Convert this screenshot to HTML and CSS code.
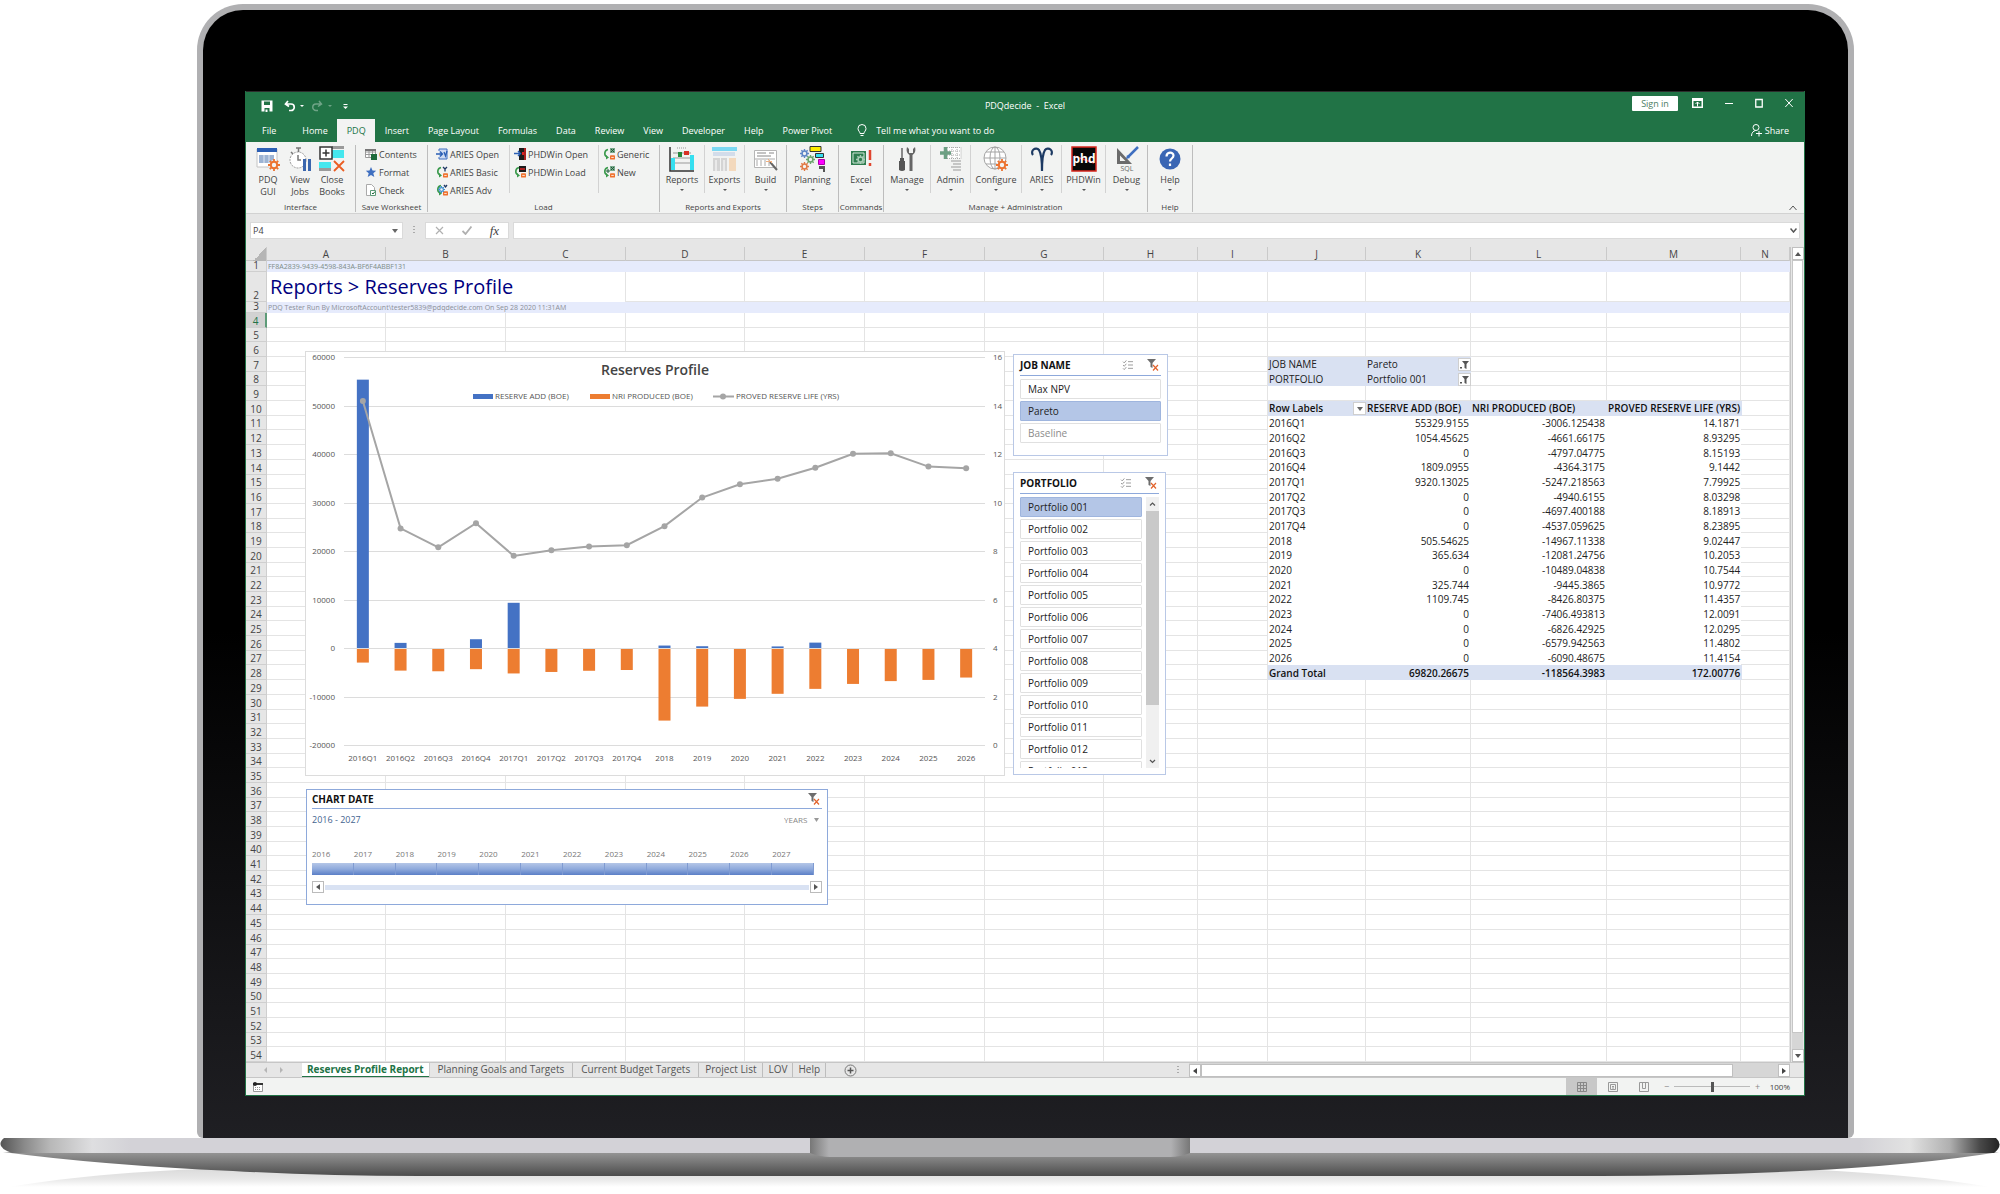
FILE: index.html
```html
<!DOCTYPE html>
<html lang="en">
<head>
<meta charset="utf-8">
<title>PDQdecide - Excel</title>
<link rel="stylesheet" href="styles.css">
</head>
<body>
<svg width="0" height="0" class="defs" aria-hidden="true">
  <defs>
    <symbol id="gear" viewBox="0 0 12 12"><circle cx="6" cy="6" r="3.2" fill="none" stroke="currentColor" stroke-width="2"/><path d="M6 0v3M6 9v3M0 6h3M9 6h3M1.8 1.8l2 2M8.200 8.200l2 2M10.200 1.800l-2 2M3.800 8.200l-2 2" stroke="currentColor" stroke-width="1.800"/></symbol>
    <symbol id="db" viewBox="0 0 6 6"><rect y="1" width="6" height="5" rx="1" fill="#f0702c"/><path d="M1.500 3.500h3" stroke="#fff"/></symbol>
    <symbol id="load" viewBox="0 0 12 12"><path d="M5 1.500a4 4 0 0 0-1 7.500" fill="none" stroke="#3a9a4c" stroke-width="1.600"/><path d="M3 7l3 2.500-3 2z" fill="#3a9a4c"/><use href="#db" x="7" y="6" width="5" height="6"/></symbol>
    <symbol id="funnel" viewBox="0 0 12 12"><path d="M0 0h9L5.500 4v5l-2-1V4z" fill="#6d6d6d"/><path d="M6 6l5 5.500M11 6l-5 5.500" stroke="#e2632c" stroke-width="1.200"/></symbol>
    <symbol id="multi" viewBox="0 0 12 12"><path d="M0 2l1.500 1.500L4 .5M0 6l1.500 1.500L4 4.500M0 10l1.500 1.500L4 8.500M6 2h6M6 6h6M6 10h6" fill="none" stroke="#8a8a8a"/></symbol>
  </defs>
</svg>
<main class="laptop">
  <div class="lid">
    <div class="app">
      <header class="titlebar">
        <div class="quick">
          <button class="tb" aria-label="Save"><svg width="12" height="12" viewBox="0 0 12 12"><path d="M.5.5h11v11H.5z" fill="#fff"/><path d="M3 1.500h6v3.500H3zM3.500 8h5v4h-5z" fill="#217346"/><path d="M4.500 9.500h2V12h-2z" fill="#fff"/></svg></button>
          <button class="tb" aria-label="Undo"><svg width="20" height="12" viewBox="0 0 20 12"><path d="M4 1L1.500 4 5 6.500M2 4h5a3 3 0 0 1 0 6.500H5" fill="none" stroke="#fff" stroke-width="1.700"/><path d="M16 5h4l-2 2z" fill="#fff"/></svg></button>
          <button class="tb faded" aria-label="Redo"><svg width="20" height="12" viewBox="0 0 20 12"><path d="M7 1l2.500 3L6 6.500M9 4H4a3 3 0 0 0 0 6.500h2" fill="none" stroke="#fff" stroke-width="1.500"/><path d="M16 5h4l-2 2z" fill="#fff"/></svg></button>
          <button class="tb" aria-label="Customize"><svg width="5" height="12" viewBox="0 0 5 12"><path d="M.5 4.500h4" stroke="#fff"/><path d="M0 6.500h5L2.500 9z" fill="#fff"/></svg></button>
        </div>
        <h1 class="doc">PDQdecide&nbsp; -&nbsp; Excel</h1>
        <div class="winctl">
          <button class="signin">Sign in</button>
          <button class="tb" aria-label="Ribbon display"><svg width="11" height="10" viewBox="0 0 11 10"><path d="M0 0h11v10H0z" fill="#fff"/><path d="M1.500 3h8v5.500h-8z" fill="#217346"/><path d="M5.500 4v4.500M3.500 6l2-2 2 2" fill="none" stroke="#fff"/></svg></button>
          <button class="tb" aria-label="Minimize"><svg width="8" height="10" viewBox="0 0 8 10"><path d="M0 5.500h8" stroke="#fff"/></svg></button>
          <button class="tb" aria-label="Maximize"><svg width="8" height="10" viewBox="0 0 8 10"><path d="M.75 1.500h6.500v7.500H.75z" fill="none" stroke="#fff" stroke-width="1.300"/></svg></button>
          <button class="tb" aria-label="Close"><svg width="8" height="10" viewBox="0 0 8 10"><path d="M.3 1l7.400 8M7.700 1L.3 9" stroke="#fff"/></svg></button>
        </div>
      </header>
      <nav class="tabs">
        <button class="tab file">File</button><button class="tab">Home</button><button class="tab on">PDQ</button><button class="tab">Insert</button><button class="tab">Page Layout</button><button class="tab">Formulas</button><button class="tab">Data</button><button class="tab">Review</button><button class="tab">View</button><button class="tab">Developer</button><button class="tab">Help</button><button class="tab">Power Pivot</button>
        <button class="tab tell"><svg width="10" height="13" viewBox="0 0 10 13"><path d="M3 9.500C3 7.500 1 7 1 4.500a4 4 0 0 1 8 0C9 7 7 7.500 7 9.500zM3.500 11.500h3" fill="none" stroke="#fff"/></svg>Tell me what you want to do</button>
        <button class="tab share"><svg width="11" height="13" viewBox="0 0 11 13"><circle cx="5" cy="3.500" r="3" fill="none" stroke="#fff"/><path d="M.5 12c0-3.500 2-5 4-5.500M8 7v5.500M5 9.500h6" fill="none" stroke="#fff"/></svg>Share</button>
      </nav>

      <section class="ribbon">
        <div class="group g-interface">
          <div class="items">
            <button class="big"><svg width="24" height="26" viewBox="0 0 24 26"><path d="M1 3h20v18H1z" fill="#fff" stroke="#c4c4c4"/><path d="M1 2h20v4H1z" fill="#2b5fb4"/><path d="M3 9h15v8H3z" fill="#9db4d4"/><path d="M8 9v8M13 9v8" stroke="#dfe7f2"/><circle cx="18" cy="19" r="5" fill="#f3f3f3"/><use href="#gear" x="12" y="13" width="12" height="12" color="#ec7330"/></svg><span>PDQ<br>GUI</span></button>
            <button class="big"><svg width="24" height="26" viewBox="0 0 24 26"><circle cx="10" cy="14" r="8" fill="#fff" stroke="#999" stroke-dasharray="2 1"/><path d="M8 2h5M10.500 2v4M10 9v5h3M3 6l2 2" fill="none" stroke="#777" stroke-width="1.500"/><path d="M15 13h3v12h-3zM20 13h3v12h-3z" fill="#3b66ad"/></svg><span>View<br>Jobs</span></button>
            <button class="big"><svg width="26" height="26" viewBox="0 0 26 26"><path d="M13 0h12v3H13zM0 22h12v3H0z" fill="#9a9a9a"/><path d="M13 4h12v8H13zM0 16h12v6H0z" fill="#45e7ee"/><path d="M1 1h12v12H1z" fill="#fff" stroke="#333" stroke-width="1.500"/><path d="M3.500 7h7M7 3.500v7" stroke="#333" stroke-width="1.500"/><path d="M15 15l10 10M25 15L15 25" stroke="#ea5e23" stroke-width="1.800"/></svg><span>Close<br>Books</span></button>
          </div><span class="caption">Interface</span>
        </div>
        <div class="group g-save">
          <div class="items"><div class="stack">
            <button class="small"><svg width="12" height="12" viewBox="0 0 12 12"><path d="M.5 1.500h10v8H.5zM.5 4h10M.5 6.500h10M4 1.500v8M7.500 1.500v8" fill="#fff" stroke="#9a9a9a"/><path d="M0 1h11v2H0z" fill="#777"/><path d="M6 6h6v6H6z" fill="#1e6b3c"/></svg>Contents</button>
            <button class="small"><svg width="12" height="12" viewBox="0 0 12 12"><path d="M6 1l1.500 3.600 3.700.2-2.900 2.400 1 3.800L6 8.900 2.700 11l1-3.800L.8 4.800l3.700-.2z" fill="#3f6fc0"/></svg>Format</button>
            <button class="small"><svg width="12" height="12" viewBox="0 0 12 12"><path d="M1.500.5h5l3 3v8h-8z" fill="#fff" stroke="#aaa"/><path d="M5.500 6.500h5v5h-5z" fill="#fff" stroke="#5d9b78"/><path d="M7 9l1 1 2-2.500" fill="none" stroke="#1e6b3c"/></svg>Check</button>
          </div></div><span class="caption">Save Worksheet</span>
        </div>
        <div class="group g-load">
          <div class="items">
            <div class="stack a">
              <button class="small"><svg width="12" height="12" viewBox="0 0 12 12"><path d="M3 3V1h8v10H3V9" fill="#cfdcf2" stroke="#3f6fc0"/><path d="M0 6h6M4 3.500L6.500 6 4 8.500M8 4l1.500 4L11 3" fill="none" stroke="#2b5fb4" stroke-width="1.300"/></svg>ARIES Open</button>
              <button class="small"><svg width="12" height="12" viewBox="0 0 12 12"><use href="#load"/><path d="M7 1l2 2 2-2M9 3v2.500" fill="none" stroke="#1f3864" stroke-width="1.300"/></svg>ARIES Basic</button>
              <button class="small"><svg width="12" height="12" viewBox="0 0 12 12"><use href="#load"/><use href="#gear" x="2" y="2" width="7" height="7" color="#3f8fd0"/><path d="M8 1l1.500 2L11 1" fill="none" stroke="#1f3864" stroke-width="1.300"/></svg>ARIES Adv</button>
            </div>
            <div class="stack b">
              <button class="small"><svg width="12" height="12" viewBox="0 0 12 12"><path d="M5 0h7v12H5z" fill="#1c1c1c"/><path d="M11 0v12" stroke="#d22" stroke-width="1.500"/><path d="M0 5.500h6M4 3l2.500 2.500L4 8" fill="none" stroke="#2b5fb4" stroke-width="1.400"/><path d="M8 4h2v3H8z" fill="#d22"/></svg>PHDWin Open</button>
              <button class="small"><svg width="12" height="12" viewBox="0 0 12 12"><use href="#load"/><path d="M5 0h7v6H5z" fill="#1c1c1c"/><path d="M6 3h5" stroke="#d22" stroke-width="1.500"/></svg>PHDWin Load</button>
            </div>
            <div class="stack c">
              <button class="small"><svg width="12" height="12" viewBox="0 0 12 12"><use href="#load"/><path d="M7 0h5v5H7z" fill="#7aa88c"/><path d="M8 1l3 3M11 1L8 4" stroke="#1e5b38"/></svg>Generic</button>
              <button class="small"><svg width="12" height="12" viewBox="0 0 12 12"><use href="#load"/><path d="M7 0h5v5H7z" fill="#7aa88c"/><path d="M8 1l3 3M11 1L8 4M3 5h4M5 3v4" stroke="#1e5b38"/></svg>New</button>
            </div>
          </div><span class="caption">Load</span>
        </div>
        <div class="group g-reports">
          <div class="items">
            <button class="big drop w45"><svg width="26" height="26" viewBox="0 0 26 26"><path d="M1 1v24h24" fill="none" stroke="#333" stroke-width="1.500"/><path d="M8 2h10" stroke="#999" stroke-dasharray="1 1"/><path d="M4 7h18M4 12h18M4 17h18" stroke="#999"/><path d="M2 12h4v12H2zM21 9h4v15h-4z" fill="#35dff0"/><path d="M9 6h4v5H9z" fill="#24893d"/><path d="M15 5h5v4h-5z" fill="#d93025"/></svg><span>Reports</span></button>
            <button class="big drop w40"><svg width="26" height="26" viewBox="0 0 26 26"><path d="M0 1h25v4H0z" fill="#7cd8f2"/><path d="M1 7h22M1 9h22" stroke="#b4c6e2"/><path d="M1 12h7v13H1zM9 12h6v13H9z" fill="#d4d4d4"/><path d="M17 12h7v13h-7z" fill="#f3d9bd"/><path d="M4 14v11M12 14v11" stroke="#fff"/></svg><span>Exports</span></button>
            <button class="big drop w41 last"><svg width="26" height="26" viewBox="0 0 26 26"><path d="M1.500 4.500h22v17h-22z" fill="#fff" stroke="#b5b5b5"/><path d="M4 7h9M16 7h5M4 10h14" stroke="#888"/><path d="M4 20v-6M8 20v-6M12 20v-6M16 20v-6M2 13h20" stroke="#aaa"/><path d="M17 16l7 8" stroke="#666" stroke-width="2"/><path d="M15 13l4 4M13 15.500h6" stroke="#f0b080"/></svg><span>Build</span></button>
          </div><span class="caption">Reports and Exports</span>
        </div>
        <div class="group g-steps">
          <div class="items"><button class="big drop last"><svg width="26" height="26" viewBox="0 0 26 26"><use href="#gear" x="0" y="3" width="9" height="9" color="#5f87c6"/><use href="#gear" x="6" y="9" width="9" height="9" color="#6aa56b"/><use href="#gear" x="0" y="16" width="9" height="9" color="#e07a45"/><path d="M10 .5h11v5H10z" fill="#ffee00" stroke="#333"/><path d="M15.500 7.500h8v4h-8z" fill="#35dff0" stroke="#333"/><path d="M18.500 13.500h6v5h-6z" fill="#f0f" stroke="#a0a"/><path d="M19 20h6v6h-2v-3h-4z" fill="#555"/></svg><span>Planning</span></button></div><span class="caption">Steps</span>
        </div>
        <div class="group g-commands">
          <div class="items"><button class="big drop last"><svg width="22" height="26" viewBox="0 0 22 26"><path d="M1 5h15v14H1z" fill="#2e7d4f"/><path d="M3 7h11v10H3z" fill="none" stroke="#cfe5d7"/><use href="#gear" x="6" y="9" width="9" height="9" color="#a9cdb7"/><path d="M20 4v10M20 17v3" stroke="#e0452f" stroke-width="2.500"/></svg><span>Excel</span></button></div><span class="caption">Commands</span>
        </div>
        <div class="group g-manage">
          <div class="items">
            <button class="big drop w47"><svg width="18" height="26" viewBox="0 0 18 26"><path d="M4 2v11" stroke="#666" stroke-width="1.500"/><path d="M2 12h4v3h1v9q-3 2-6 0v-9h1z" fill="#555"/><path d="M9 1c-1 4 0 6 2.500 8v16h3V9c2.500-2 3.500-4 2.500-8l-2 2v4h-4V3z" fill="#666"/></svg><span>Manage</span></button>
            <button class="big drop w40"><svg width="24" height="26" viewBox="0 0 24 26"><path d="M8 1.500h14v11H8zM8 5h14M8 9h14M13 1v11M18 1v11" fill="#fff" stroke="#aaa" stroke-dasharray="1 1"/><path d="M1 7h11M6.500 1v12" stroke="#6c9f83" stroke-width="3.500"/><path d="M12 15h10M14 18h8M12 21h10M14 24h8" stroke="#999"/></svg><span>Admin</span></button>
            <button class="big drop w51"><svg width="26" height="26" viewBox="0 0 26 26"><g fill="none" stroke="#a5a5a5"><circle cx="12" cy="12" r="11" fill="#fff"/><ellipse cx="12" cy="12" rx="5" ry="11"/><path d="M1 12h22M12 1v22M3 6h18M3 18h18"/></g><circle cx="19" cy="19" r="5" fill="#f3f3f3"/><use href="#gear" x="13" y="13" width="12" height="12" color="#ec7330"/></svg><span>Configure</span></button>
            <button class="big drop w40"><svg width="24" height="26" viewBox="0 0 24 26"><path d="M3 9a3.500 3.500 0 1 1 6-5c2 3 3 12 3 21 0-9 1-18 3-21a3.500 3.500 0 1 1 6 5" fill="none" stroke="#1d3a63" stroke-width="2.200"/></svg><span>ARIES</span></button>
            <button class="big drop w44"><svg width="26" height="26" viewBox="0 0 26 26"><path d="M1 1h24v24H1z" fill="#080808" stroke="#d8261c" stroke-width="1.500"/><path d="M3 10l20 7" stroke="#d8261c" stroke-width="1.500"/><text x="13" y="17" class="phd">phd</text></svg><span>PHDWin</span></button>
            <button class="big drop w41 last"><svg width="26" height="26" viewBox="0 0 26 26"><path d="M3 2v16h15zM6 9.500V15h5.500z" fill="#6b6b6b" fill-rule="evenodd"/><path d="M14 11L24 1" stroke="#3f6fc0" stroke-width="2.500"/><path d="M13 9l-1 4 4-1z" fill="#3f6fc0"/><text x="13" y="25" class="sql">SQL</text></svg><span>Debug</span></button>
          </div><span class="caption">Manage + Administration</span>
        </div>
        <div class="group g-help">
          <div class="items"><button class="big drop last"><svg width="22" height="26" viewBox="0 0 22 26"><circle cx="11" cy="13" r="10.500" fill="#3a66b4"/><path d="M7.500 10.500c0-5 7-5 7-1 0 3-3.500 3-3.500 6M11 17.500v2.500" fill="none" stroke="#fff" stroke-width="2.200"/></svg><span>Help</span></button></div><span class="caption">Help</span>
        </div>
        <button class="collapse" aria-label="Collapse ribbon"><svg width="8" height="6" viewBox="0 0 8 6"><path d="M.5 5L4 1l3.500 4" fill="none" stroke="#555"/></svg></button>
      </section>

      <section class="formula">
        <div class="namebox"><input type="text" value="P4" aria-label="Name box"><svg width="6" height="4" viewBox="0 0 6 4"><path d="M0 0h6L3 4z" fill="#666"/></svg></div>
        <span class="dots"></span>
        <div class="fx">
          <button aria-label="Cancel"><svg width="9" height="9" viewBox="0 0 9 9"><path d="M1 1l7 7M8 1L1 8" stroke="#b0b0b0" stroke-width="1.200"/></svg></button>
          <button aria-label="Enter"><svg width="10" height="9" viewBox="0 0 10 9"><path d="M.5 5L3.500 8l6-7.500" fill="none" stroke="#b0b0b0" stroke-width="1.800"/></svg></button>
          <button class="fn" aria-label="Insert function">fx</button>
        </div>
        <div class="entry"><input type="text" aria-label="Formula bar"><svg width="7" height="5" viewBox="0 0 7 5"><path d="M.5.5l3 3.500 3-3.500" fill="none" stroke="#555" stroke-width="1.500"/></svg></div>
      </section>

      <section class="book">
        <div class="pane">
          <div class="cols" id="cols"><span class="corner"></span></div>
          <div class="sheet" id="sheet">
            <div class="cell guid">FF8A2839-9439-4598-843A-BF6F4ABBF131</div>
            <h2 class="cell heading">Reports &gt; Reserves Profile</h2>
            <div class="cell runby">PDQ Tester Run By MicrosoftAccount\tester5839@pdqdecide.com On Sep 28 2020 11:31AM</div>
            <table class="filters">
              <tbody>
                <tr><th scope="row">JOB NAME</th><td>Pareto<button class="cellbtn" aria-label="Filter job"><svg width="9" height="8" viewBox="0 0 9 8"><path d="M2 0h7L6.500 3v5l-2-1V3z" fill="#555"/><path d="M0 6h2v1.500H0z" fill="#555"/></svg></button></td></tr>
                <tr><th scope="row">PORTFOLIO</th><td>Portfolio 001<button class="cellbtn" aria-label="Filter portfolio"><svg width="9" height="8" viewBox="0 0 9 8"><path d="M2 0h7L6.500 3v5l-2-1V3z" fill="#555"/><path d="M0 6h2v1.500H0z" fill="#555"/></svg></button></td></tr>
              </tbody>
            </table>
            <table class="pivot">
              <thead><tr><th scope="col">Row Labels<button class="cellbtn" aria-label="Filter rows"><svg width="6" height="4" viewBox="0 0 6 4"><path d="M0 0h6L3 4z" fill="#666"/></svg></button></th><th scope="col">RESERVE ADD (BOE)</th><th scope="col">NRI PRODUCED (BOE)</th><th scope="col">PROVED RESERVE LIFE (YRS)</th></tr></thead>
              <tbody id="pivot"></tbody>
              <tfoot><tr><th scope="row">Grand Total</th><td>69820.26675</td><td>-118564.3983</td><td>172.00776</td></tr></tfoot>
            </table>

            <figure class="object chart"><svg id="chart" viewBox="0 0 698 423" width="698" height="423" role="img" aria-label="Reserves Profile"></svg></figure>

            <section class="object slicer job">
              <header><h3>JOB NAME</h3><svg width="12" height="10"><use href="#multi"/></svg><svg width="12" height="12"><use href="#funnel"/></svg></header>
              <div class="list"><button class="pick">Max NPV</button><button class="pick on">Pareto</button><button class="pick none">Baseline</button></div>
            </section>
            <section class="object slicer portfolio">
              <header><h3>PORTFOLIO</h3><svg width="12" height="10"><use href="#multi"/></svg><svg width="12" height="12"><use href="#funnel"/></svg></header>
              <div class="scroller">
                <div class="list" id="portfolios"></div>
                <div class="bar"><svg width="13" height="14" viewBox="0 0 13 14"><path d="M4 8.500L6.500 6 9 8.500" fill="none" stroke="#555" stroke-width="1.200"/></svg><i></i><svg width="13" height="14" viewBox="0 0 13 14"><path d="M4 6l2.500 2.500L9 6" fill="none" stroke="#555" stroke-width="1.200"/></svg></div>
              </div>
            </section>
            <section class="object timeline">
              <header><h3>CHART DATE</h3><svg width="12" height="12"><use href="#funnel"/></svg></header>
              <div class="range"><span>2016 - 2027</span><label><select aria-label="Time level"><option>YEARS</option></select><svg width="5" height="4" viewBox="0 0 5 4"><path d="M0 0h5L2.500 4z" fill="#999"/></svg></label></div>
              <div class="years" id="years"></div>
              <div class="tscroll"><button aria-label="Earlier"><svg width="4" height="6" viewBox="0 0 4 6"><path d="M4 0v6L0 3z" fill="#555"/></svg></button><i></i><button aria-label="Later"><svg width="4" height="6" viewBox="0 0 4 6"><path d="M0 0v6l4-3z" fill="#555"/></svg></button></div>
            </section>
          </div>
        </div>
        <div class="vscroll">
          <button aria-label="Up"><svg width="6" height="4" viewBox="0 0 6 4"><path d="M0 4h6L3 0z" fill="#555"/></svg></button>
          <i></i><b></b>
          <button aria-label="Down"><svg width="6" height="4" viewBox="0 0 6 4"><path d="M0 0h6L3 4z" fill="#555"/></svg></button>
        </div>
      </section>

      <nav class="sheets">
        <div class="step"><svg width="20" height="6" viewBox="0 0 20 6"><path d="M3 0v6L0 3zM16 0v6l3-3z" fill="#b5b5b5"/></svg></div>
        <button class="stab on">Reserves Profile Report</button><button class="stab wide">Planning Goals and Targets</button><button class="stab wide">Current Budget Targets</button><button class="stab mid">Project List</button><button class="stab">LOV</button><button class="stab">Help</button>
        <button class="add" aria-label="New sheet"><svg width="13" height="13" viewBox="0 0 13 13"><circle cx="6.500" cy="6.500" r="5.500" fill="none" stroke="#777"/><path d="M3.500 6.500h6M6.500 3.500v6" stroke="#555" stroke-width="1.500"/></svg></button>
        <span class="dots"></span>
        <div class="hscroll">
          <button aria-label="Left"><svg width="4" height="6" viewBox="0 0 4 6"><path d="M4 0v6L0 3z" fill="#444"/></svg></button>
          <i></i><b></b>
          <button aria-label="Right"><svg width="4" height="6" viewBox="0 0 4 6"><path d="M0 0v6l4-3z" fill="#444"/></svg></button>
        </div>
      </nav>
      <footer class="status">
        <svg class="macro" width="10" height="10" viewBox="0 0 10 10"><path d="M.5 1.500h9v8h-9z" fill="#fff" stroke="#999"/><path d="M2 5.500h6M2 7.500h6" stroke="#999" stroke-dasharray="1 1"/><path d="M0 1h10v2H0z" fill="#333"/><circle cx="2" cy="2" r="2" fill="#222"/></svg>
        <button class="view on" aria-label="Normal"><svg width="10" height="10" viewBox="0 0 10 10"><path d="M.5.5h9v9h-9zM.5 3.500h9M.5 6.500h9M3.500.5v9M6.500.5v9" fill="none" stroke="#888"/></svg></button>
        <button class="view" aria-label="Page layout"><svg width="10" height="10" viewBox="0 0 10 10"><path d="M.5.5h9v9h-9zM2.500 2.500h5v5h-5zM4 4.500h2M4 6h2" fill="none" stroke="#999"/></svg></button>
        <button class="view" aria-label="Page break"><svg width="10" height="10" viewBox="0 0 10 10"><path d="M.5 9.500v-9h9v9zM3.500.5v6h3v-6" fill="none" stroke="#999"/></svg></button>
        <span class="sign">−</span><input type="range" class="zoom" min="0" max="100" value="50" aria-label="Zoom"><span class="sign">+</span><span class="pct">100%</span>
      </footer>
    </div>
  </div>
  <svg class="base" viewBox="0 0 2000 57" preserveAspectRatio="none" aria-hidden="true">
    <defs>
      <linearGradient id="deck"><stop offset="0" stop-color="#555"/><stop offset=".012" stop-color="#8a8a8a"/><stop offset=".025" stop-color="#b8b8b8"/><stop offset=".046" stop-color="#dedee0"/><stop offset=".065" stop-color="#d3d2d7"/><stop offset=".93" stop-color="#d3d2d7"/><stop offset=".955" stop-color="#e2e2e2"/><stop offset=".975" stop-color="#b0b0b0"/><stop offset=".99" stop-color="#4a4a4a"/><stop offset="1" stop-color="#222"/></linearGradient>
      <linearGradient id="belly" x2="0" y2="1"><stop offset="0" stop-color="#979797"/><stop offset="1" stop-color="#4c4c4c"/></linearGradient>
      <linearGradient id="notch"><stop offset="0" stop-color="#777"/><stop offset=".05" stop-color="#b0b0b2"/><stop offset=".95" stop-color="#b0b0b2"/><stop offset="1" stop-color="#777"/></linearGradient>
      <linearGradient id="shade" x2="0" y2="1"><stop offset="0" stop-color="#d8d8d8"/><stop offset=".6" stop-color="#e8e8e8"/><stop offset="1" stop-color="#fff"/></linearGradient>
    </defs>
    <path d="M10 50Q100 34 260 30H1740Q1900 34 1990 50Z" fill="url(#shade)"/>
    <path d="M3 15H1999Q1920 28 1800 34Q1700 39 1600 39H420Q320 39 233 34Q100 28 3 15Z" fill="url(#belly)"/>
    <path d="M4 1H1996Q2004 8 1994 16H12Q-6 10 4 1Z" fill="url(#deck)"/>
    <path d="M810 1H1190V16Q1180 20 1170 20H830Q820 20 810 16Z" fill="url(#notch)"/>
  </svg>
</main>
<script src="app.js"></script>
</body>
</html>
```
FILE: styles.css
```css
* { box-sizing: border-box; }
body { margin: 0; background: #fff; font-family: "Open Sans", "Noto Sans", sans-serif; font-size: 9px; color: #444; }
button, input, select { font: inherit; color: inherit; border: 0; background: none; padding: 0; margin: 0; }
button { display: flex; align-items: center; justify-content: center; white-space: nowrap; }
h1, h2, h3, figure { margin: 0; font: inherit; }
svg { flex: none; }
.defs { position: absolute; }

/* Laptop shell */
.laptop { padding-top: 4px; overflow: hidden; }
.lid { margin: 0 7.3% 0 9.85%; padding: 81px 43px 42px 42px; border: 6px solid #b0b0b2; border-bottom: 0; border-radius: 46px 46px 6px 6px; background: linear-gradient(#000 55%, #1f1f23); }
.base { display: block; width: 100%; height: 57px; margin-top: -1px; }
.app { border: solid #217346; border-width: 0 1px 1px; background: #e6e6e6; }

/* Title bar and tabs */
.titlebar { height: 28px; background: #217346; color: #fff; display: grid; grid-template-columns: 1fr auto 1fr; align-items: center; border-top: 1px solid #2c2c2c; }
.quick { display: flex; gap: 11px; padding-left: 15px; }
.quick .tb:nth-child(3) { margin-left: -3px; }
.faded { opacity: .35; }
.winctl { display: flex; align-items: center; justify-content: flex-end; gap: 22px; padding-right: 11px; height: 22px; align-self: start; }
.signin { width: 46px; height: 15px; margin-right: -8px; border-radius: 1px; background: #fff; color: #4c7d62; }
.tabs { display: flex; height: 23px; background: #217346; color: #fff; }
.tab { padding: 0 9px 0 10px; }
.tab.file { padding: 0 16px; }
.tab.on { background: #f3f3f3; color: #217346; }
.tell { gap: 9px; margin-left: 6px; }
.share { gap: 3px; margin-left: auto; padding-right: 15px; }

/* Ribbon */
.ribbon { display: flex; height: 72px; padding-top: 3px; background: #f2f3f2; border-bottom: 1px solid #d2d2d2; }
.group { display: flex; flex-direction: column; border-right: 1px solid #bdbdbd; margin-bottom: 1px; }
.items { display: flex; height: 57px; }
.caption { font-size: 8px; line-height: 10px; text-align: center; white-space: nowrap; }
.g-interface { width: 110px; }
.g-interface .items { padding-left: 6px; }
.g-save { width: 72px; }
.g-load { width: 232px; }
.g-reports { width: 127px; }
.g-steps { width: 52px; }
.g-commands { width: 45px; }
.g-manage { width: 264px; }
.g-help { width: 45px; }
.big { flex-direction: column; justify-content: flex-start; gap: 2px; width: 32px; padding-top: 1px; line-height: 12px; }
.drop { position: relative; flex: 1; height: 48px; border-right: 1px solid #d2d2d2; }
.drop::after { content: ""; margin-top: 1px; border: solid transparent; border-width: 2px 2px 0; border-top-color: #555; }
.last { border-right: 0; }
.w40 { flex: 0 0 40px; } .w41 { flex: 0 0 41px; } .w44 { flex: 0 0 44px; }
.w45 { flex: 0 0 45px; } .w47 { flex: 0 0 47px; } .w51 { flex: 0 0 51px; }
.small { height: 18px; gap: 2px; }
.stack { display: flex; flex-direction: column; align-items: flex-start; padding-left: 9px; }
.stack.a { width: 81px; padding-left: 8px; }
.stack.b { width: 89px; height: 48px; padding-left: 4px; border-left: 1px solid #d2d2d2; }
.stack.c { padding-left: 4px; height: 48px; border-left: 1px solid #d2d2d2; }
.phd { font: bold 12px "Open Sans", sans-serif; fill: #fff; text-anchor: middle; }
.sql { font-size: 7px; fill: #666; text-anchor: middle; }
.collapse { margin: auto 7px 2px auto; }

/* Formula bar */
.formula { display: flex; align-items: center; height: 33px; padding: 0 4px; background: #e6e6e6; }
.formula input { flex: 1; min-width: 0; outline: 0; }
.namebox, .fx, .entry { display: flex; align-items: center; height: 17px; background: #fff; border: 1px solid #dadada; }
.namebox { width: 153px; padding: 0 4px 0 2px; }
.formula .dots { margin: 0 10px; }
.dots { width: 2px; height: 9px; background: repeating-linear-gradient(#aaa 0 1px, transparent 1px 3px); }
.fx { width: 84px; justify-content: space-around; }
.fn { font: italic 13px "Liberation Serif", serif; }
.entry { flex: 1; margin-left: 4px; padding-right: 2px; }

/* Worksheet */
.book { --cols: 119px 120px 120px 119px 120px 120px 119px 94px 70px 98px 105px 136px 134px minmax(49px, 1fr); display: grid; grid-template-columns: 1fr 15px; }
.cols { display: grid; grid-template-columns: 21px var(--cols); height: 14px; font-size: 10px; line-height: 15px; text-align: center; border-bottom: 1px solid #c6c6c6; }
.cols span { border-right: 1px solid #cacaca; }
.corner { background: linear-gradient(135deg, transparent 60%, #b5b5b5 60%); }
.sheet { position: relative; display: grid; grid-template-columns: 21px var(--cols); grid-template-rows: 11px 30px 11px repeat(51, 1fr); height: 801px; background: #fff; font-size: 10px; color: #222; }
.rownum { grid-column: 1; display: flex; align-items: flex-end; justify-content: center; background: #e6e6e6; border: solid #cfcfcf; border-width: 0 1px 1px 0; line-height: 11px; color: #444; }
.rownum.current { background: #d2d2d2; color: #217346; border-right: 2px solid #5d9b78; }
.hline { grid-column: 2 / -1; border-bottom: 1px solid #e4e4e4; }
.vline { grid-row: 1 / -1; border-right: 1px solid #e4e4e4; }
.cell { white-space: nowrap; z-index: 1; }
.guid { grid-area: 1 / 2 / 2 / -1; background: #e6ebfc; font-size: 7px; line-height: 12px; padding-left: 1px; color: #7d8c86; }
.heading { grid-area: 2 / 2 / 3 / 5; background: #fff; padding-left: 3px; font-size: 20px; line-height: 30px; color: #000080; margin-right: 1px; }
.runby { grid-area: 3 / 2 / 4 / -1; background: #e6ebfc; font-size: 7px; line-height: 11px; padding-left: 1px; color: #8b8f98; }
table { z-index: 1; display: grid; grid-template-rows: subgrid; font-size: 10px; line-height: 12px; }
thead, tbody, tfoot { display: contents; }
tr { display: grid; align-items: center; }
th, td { display: block; position: relative; padding: 0 2px 0 1px; text-align: left; font-weight: 400; white-space: nowrap; }
.filters { grid-area: 7 / 11 / 9 / 13; background: #d9e1f2; }
.filters tr { grid-template-columns: 98px 1fr; }
.pivot { grid-area: 10 / 11 / 29 / 15; background: #fff; }
.pivot tr { grid-template-columns: 98px 105px 136px 1fr; }
.pivot td { text-align: right; }
.pivot thead tr, .pivot tfoot tr { background: #d9e1f2; }
.pivot thead th, .pivot tfoot * { font-weight: 600; color: #111; }
.cellbtn { position: absolute; right: 0; top: 0; width: 13px; height: 13px; background: #fff; border: 1px solid #cfcfcf; }

/* Objects floating over the grid */
.object { position: absolute; z-index: 2; background: #fff; }
.chart { left: 60px; top: 91px; width: 698px; height: 423px; outline: 1px solid #dcdcdc; }
.chart text { font-size: 8px; fill: #555; }
.chart .ctitle { font-size: 14px; font-weight: 600; fill: #444; text-anchor: middle; }
.end { text-anchor: end; } .middle { text-anchor: middle; }
.slicer { border: 1px solid #b9c8e6; padding: 0 6px; }
.object header { display: flex; align-items: center; height: 21px; gap: 13px; padding-right: 2px; border-bottom: 1px solid #8ea9db; }
.object h3 { margin-right: auto; font-weight: 700; font-size: 10px; color: #111; }
.job { left: 767px; top: 93px; width: 155px; height: 102px; }
.portfolio { left: 767px; top: 211px; width: 153px; height: 303px; }
.list { display: flex; flex-direction: column; gap: 2px; padding-top: 3px; }
.pick { flex: none; height: 20px; justify-content: flex-start; padding-left: 7px; border: 1px solid #e0e0e0; border-radius: 1px; }
.pick.on { background: #b4c6e7; border-color: #9fb5de; }
.pick.none { color: #8c8c8c; }
.scroller { display: grid; grid-template-columns: 1fr 13px; gap: 4px; height: 274px; overflow: hidden; }
.scroller .list { min-height: 0; overflow: hidden; }
.bar { display: flex; flex-direction: column; justify-content: space-between; margin-top: 3px; background: #f0f0f0; }
.bar i { height: 194px; margin-bottom: auto; background: #c9c9c9; }
.timeline { left: 60px; top: 528px; width: 522px; height: 116px; padding: 0 5px; border: 1px solid #8ea9db; }
.timeline header { height: 19px; }
.range { display: flex; justify-content: space-between; height: 21px; align-items: center; font-size: 9px; color: #44648f; }
.range label { display: flex; align-items: center; gap: 6px; padding-right: 3px; font-size: 8px; color: #888; }
.range select { appearance: none; }
.years { display: grid; grid-template-columns: repeat(12, 1fr); margin: 18px 8px 0 0; font-size: 8px; line-height: 12px; color: #777; }
.years span::after { content: ""; display: block; height: 12px; margin-top: 3px; background: linear-gradient(#b4c6e7, #8faadc 50%, #5b7fc7); border-right: 1px solid #7f9bd2; }
.tscroll { display: flex; align-items: center; gap: 1px; margin-top: 6px; }
.tscroll button { width: 12px; height: 12px; border: 1px solid #bbb; }
.tscroll i { flex: 1; height: 5px; background: #d9e2f3; }

/* Scroll bars, sheet tabs, status bar */
.vscroll { display: flex; flex-direction: column; padding: 0 1px; margin-right: 1px; border-left: 1px solid #c6c6c6; }
.vscroll button, .hscroll button { flex: none; width: 12px; height: 13px; background: #fff; border: 1px solid #c0c0c0; }
.vscroll i { flex: 1; background: #fff; border: 1px solid #c6c6c6; }
.vscroll b { height: 16px; background: #d6d6d6; }
.sheets { display: flex; align-items: stretch; height: 16px; background: #e6e6e6; border: solid #c6c6c6; border-width: 1px 0; font-size: 10px; line-height: 12px; color: #555; }
.step { width: 56px; display: flex; align-items: center; justify-content: center; }
.stab { padding: 0 5px 2px; border-right: 1px solid #bdbdbd; }
.stab.mid { padding: 0 6px 2px; } .stab.wide { padding: 0 8px 2px; }
.stab.on { background: #fff; color: #217346; font-weight: 700; border-right-color: #ccc; box-shadow: inset 0 -1px #217346; }
.add { margin-left: 18px; }
.sheets .dots { margin: 3px 10px 0 auto; }
.hscroll { display: flex; width: 39%; max-width: 601px; margin-right: 14px; padding-top: 1px; background: #d6d6d6; }
.hscroll i { flex: 1; background: #fff; border: 1px solid #c0c0c0; }
.hscroll b { width: 45px; }
.status { display: flex; align-items: center; height: 17px; padding: 0 14px 0 7px; background: #f2f3f2; }
.macro { margin-right: auto; }
.view { width: 31px; height: 17px; }
.view.on { background: #c8c8c8; }
.sign { width: 15px; text-align: center; color: #888; }
.zoom { appearance: none; width: 76px; height: 11px; background: linear-gradient(#bbb, #bbb) center / 100% 1px no-repeat; }
.zoom::-webkit-slider-thumb { appearance: none; width: 3px; height: 10px; background: #555; }
.pct { width: 25px; text-align: right; font-size: 8px; }
```
FILE: app.js
```js
const data = [
  ['2016Q1', '55329.9155', '-3006.125438', '14.1871'],
  ['2016Q2', '1054.45625', '-4661.66175', '8.93295'],
  ['2016Q3', '0', '-4797.04775', '8.15193'],
  ['2016Q4', '1809.0955', '-4364.3175', '9.1442'],
  ['2017Q1', '9320.13025', '-5247.218563', '7.79925'],
  ['2017Q2', '0', '-4940.6155', '8.03298'],
  ['2017Q3', '0', '-4697.400188', '8.18913'],
  ['2017Q4', '0', '-4537.059625', '8.23895'],
  ['2018', '505.54625', '-14967.11338', '9.02447'],
  ['2019', '365.634', '-12081.24756', '10.2053'],
  ['2020', '0', '-10489.04838', '10.7544'],
  ['2021', '325.744', '-9445.3865', '10.9772'],
  ['2022', '1109.745', '-8426.80375', '11.4357'],
  ['2023', '0', '-7406.493813', '12.0091'],
  ['2024', '0', '-6826.42925', '12.0295'],
  ['2025', '0', '-6579.942563', '11.4802'],
  ['2026', '0', '-6090.48675', '11.4154'],
];
const byId = (id) => document.getElementById(id);

// Pivot rows
byId('pivot').innerHTML = data.map((r) =>
  `<tr><th scope="row">${r[0]}</th><td>${r[1]}</td><td>${r[2]}</td><td>${r[3]}</td></tr>`).join('');

// Column letters, row numbers and grid lines
byId('cols').insertAdjacentHTML('beforeend', [...'ABCDEFGHIJKLMN'].map((c) => `<span>${c}</span>`).join(''));
let lines = '';
for (let c = 2; c <= 15; c++) lines += `<i class="vline" style="grid-column:${c}"></i>`;
for (let r = 1; r <= 54; r++) {
  lines += `<span class="rownum${r === 4 ? ' current' : ''}" style="grid-row:${r}">${r}</span><i class="hline" style="grid-row:${r}"></i>`;
}
byId('sheet').insertAdjacentHTML('afterbegin', lines);

// Slicer and timeline entries
byId('portfolios').innerHTML = Array.from({ length: 13 }, (_, i) =>
  `<button class="pick${i === 0 ? ' on' : ''}">Portfolio ${String(i + 1).padStart(3, '0')}</button>`).join('');
byId('years').innerHTML = Array.from({ length: 12 }, (_, i) => `<span>${2016 + i}</span>`).join('');

// Combined bar and line chart
const plot = { left: 38, right: 679, top: 5, bottom: 393 };
const plotHeight = plot.bottom - plot.top;
const y = (v) => plot.bottom - ((v + 20000) / 80000) * plotHeight;
const y2 = (v) => plot.bottom - (v / 16) * plotHeight;
const x = (i) => plot.left + ((i + 0.5) * (plot.right - plot.left)) / data.length;
let svg = '';
for (let i = 0; i <= 8; i++) {
  const v = -20000 + i * 10000, py = Math.round(y(v));
  svg += `<path d="M${plot.left} ${py + 0.5}H${plot.right}" stroke="#dcdcdc"/><text class="end" x="29" y="${py + 3}">${v}</text><text x="687" y="${py + 3}">${i * 2}</text>`;
}
data.forEach((r, i) => {
  const add = y(+r[1]), out = y(+r[2]), zero = y(0);
  svg += `<rect x="${x(i) - 6}" y="${add}" width="12" height="${zero - add}" fill="#4472c4"/>`;
  svg += `<rect x="${x(i) - 6}" y="${zero + 1}" width="12" height="${out - zero - 1}" fill="#ed7d31"/>`;
  svg += `<text class="middle" x="${x(i)}" y="409">${r[0]}</text>`;
});
svg += `<polyline fill="none" stroke="#a5a5a5" stroke-width="2" points="${data.map((r, i) => x(i) + ',' + y2(+r[3])).join(' ')}"/>`;
svg += data.map((r, i) => `<circle cx="${x(i)}" cy="${y2(+r[3])}" r="3" fill="#a5a5a5"/>`).join('');
svg += `<text class="ctitle" x="349" y="23">Reserves Profile</text>
<path d="M167 42h20v5h-20z" fill="#4472c4"/><text x="189" y="47">RESERVE ADD (BOE)</text>
<path d="M284 42h20v5h-20z" fill="#ed7d31"/><text x="306" y="47">NRI PRODUCED (BOE)</text>
<path d="M407 44.500h21" stroke="#a5a5a5" stroke-width="2"/><circle cx="417" cy="44.500" r="3" fill="#a5a5a5"/><text x="430" y="47">PROVED RESERVE LIFE (YRS)</text>`;
byId('chart').innerHTML = svg;
```
